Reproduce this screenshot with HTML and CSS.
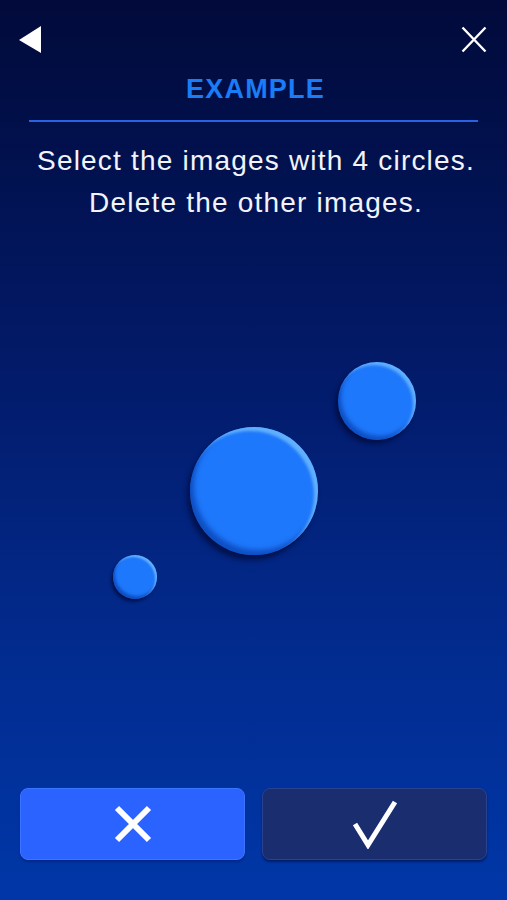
FILE: index.html
```html
<!DOCTYPE html>
<html lang="en">
<head>
<meta charset="utf-8">
<title>Example</title>
<link rel="stylesheet" href="styles.css">
</head>
<body>
<div class="screen">
  <div class="topbar">
    <button class="icon-btn back" aria-label="Back">
      <svg width="22" height="27" viewBox="0 0 22 27"><polygon points="0,14 22,0 22,27" fill="#ffffff"/></svg>
    </button>
    <button class="icon-btn close" aria-label="Close">
      <svg width="26" height="27" viewBox="0 0 26 27"><path d="M1.5 1.5 L24.5 25.5 M24.5 1.5 L1.5 25.5" stroke="#ffffff" stroke-width="2.4" fill="none"/></svg>
    </button>
  </div>
  <h1 class="title">EXAMPLE</h1>
  <div class="divider"></div>
  <p class="instructions">Select the images with 4 circles.<br>Delete the other images.</p>
  <div class="canvas">
    <div class="circle c-big"></div>
    <div class="circle c-mid"></div>
    <div class="circle c-small"></div>
  </div>
  <div class="actions">
    <button class="action delete" aria-label="Delete">
      <svg width="38" height="38" viewBox="0 0 38 38"><path d="M3 3 L35 35 M35 3 L3 35" stroke="#ffffff" stroke-width="6" fill="none"/></svg>
    </button>
    <button class="action select" aria-label="Select">
      <svg width="46" height="50" viewBox="0 0 46 50"><polyline points="3,25 16,46 43,3" stroke="#ffffff" stroke-width="5" fill="none" stroke-linejoin="miter"/></svg>
    </button>
  </div>
</div>
</body>
</html>
```
FILE: styles.css
```css
html, body {
  margin: 0;
  padding: 0;
}
body {
  width: 507px;
  height: 900px;
  overflow: hidden;
  background: linear-gradient(180deg, #010a3a 0%, #021a68 40%, #022a8c 70%, #0037a8 100%);
  font-family: "Liberation Sans", Arial, sans-serif;
  color: #ffffff;
}
.screen {
  height: 900px;
  display: flex;
  flex-direction: column;
}
.topbar {
  display: flex;
  justify-content: space-between;
  align-items: flex-start;
  padding: 26px 19px 0 19px;
  height: 27px;
}
.icon-btn {
  background: none;
  border: 0;
  padding: 0;
  margin: 0;
  display: block;
  line-height: 0;
}
.close {
  margin-right: 1px;
}
.title {
  margin: 21px 0 0 0;
  padding-left: 4px;
  font-size: 27px;
  line-height: 31px;
  font-weight: bold;
  letter-spacing: 1.2px;
  text-align: center;
  color: #1a7cf7;
}
.divider {
  margin: 15px 29px 0 29px;
  height: 2px;
  background: #2a62e6;
}
.instructions {
  margin: 18px 0 0 0;
  padding-left: 5px;
  font-size: 28px;
  line-height: 42px;
  letter-spacing: 1.2px;
  text-align: center;
  color: #f2f4fa;
}
.canvas {
  position: relative;
  flex: 1;
}
.circle {
  position: absolute;
  border-radius: 50%;
  background: #1e78fb;
}
.c-big {
  left: 190px;
  top: 203px;
  width: 128px;
  height: 128px;
  box-shadow:
    inset -4px 4px 3px rgba(120, 195, 255, 0.75),
    inset 4px -5px 5px rgba(0, 45, 150, 0.55),
    -3px 5px 5px rgba(0, 8, 50, 0.65);
}
.c-mid {
  left: 338px;
  top: 138px;
  width: 78px;
  height: 78px;
  box-shadow:
    inset -3px 3px 3px rgba(120, 195, 255, 0.75),
    inset 3px -4px 4px rgba(0, 45, 150, 0.55),
    -3px 4px 4px rgba(0, 8, 50, 0.65);
}
.c-small {
  left: 113px;
  top: 331px;
  width: 44px;
  height: 44px;
  box-shadow:
    inset -2px 2px 2px rgba(120, 195, 255, 0.75),
    inset 2px -3px 3px rgba(0, 45, 150, 0.55),
    -2px 3px 3px rgba(0, 8, 50, 0.65);
}
.actions {
  display: flex;
  gap: 17px;
  padding: 0 20px 40px 20px;
}
.action {
  flex: 1;
  height: 72px;
  border-radius: 8px;
  display: flex;
  align-items: center;
  justify-content: center;
  padding: 0;
  margin: 0;
  line-height: 0;
}
.delete {
  background: #2a63ff;
  border: 1px solid #3a74ff;
  box-shadow: 0 2px 2px rgba(0, 20, 90, 0.35);
}
.select {
  background: #1a2d6f;
  border: 1px solid #2a4190;
  box-shadow: 0 2px 2px rgba(0, 10, 50, 0.5);
}
```
